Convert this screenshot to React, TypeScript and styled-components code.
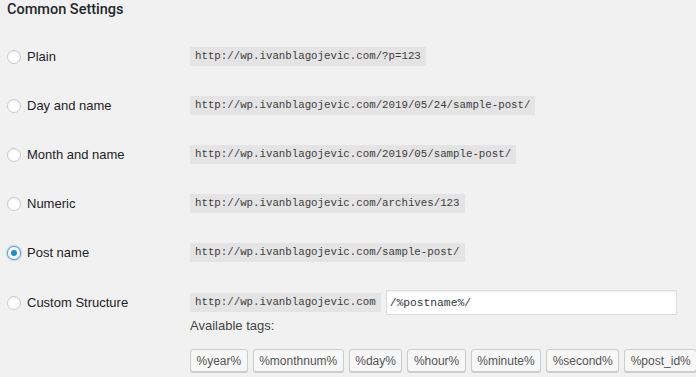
import React from 'react';
import styled, { createGlobalStyle } from 'styled-components';

const GlobalStyle = createGlobalStyle`
  html, body {
    margin: 0;
    padding: 0;
    background: #f1f1f1;
  }
  body {
    font-family: "Liberation Sans", Arial, sans-serif;
    color: #23282d;
  }
`;

const Page = styled.div`
  padding: 2px 7px 0;
  width: 696px;
  height: 377px;
  box-sizing: border-box;
  overflow: hidden;
`;

const Heading = styled.h2`
  margin: 0;
  font-family: Roboto, "Liberation Sans", Arial, sans-serif;
  font-size: 14.5px;
  line-height: 16px;
  font-weight: 500;
  color: #23282d;
`;

const List = styled.div`
  margin-top: 14px;
  display: flex;
  flex-direction: column;
`;

const Row = styled.div`
  display: grid;
  grid-template-columns: 183px 1fr;
  align-items: center;
  height: 49px;
`;

const CustomRow = styled.div`
  display: grid;
  grid-template-columns: 183px 1fr;
  align-items: start;
  padding-top: 13px;
`;

const Choice = styled.label<{ $tall?: boolean }>`
  display: flex;
  align-items: center;
  gap: 6px;
  height: ${(p) => (p.$tall ? '25px' : 'auto')};
  font-size: 13px;
  color: #1d2226;
`;

const Radio = styled.span<{ $checked?: boolean }>`
  position: relative;
  width: 14px;
  height: 14px;
  border-radius: 50%;
  box-sizing: border-box;
  background: #fff;
  border: 1px solid ${(p) => (p.$checked ? '#5b9dd9' : '#c7cbce')};
  box-shadow: ${(p) =>
    p.$checked ? '0 0 2px rgba(30,140,190,.8)' : 'inset 0 1px 2px rgba(0,0,0,.07)'};

  &::after {
    content: '';
    display: ${(p) => (p.$checked ? 'block' : 'none')};
    position: absolute;
    left: 3px;
    top: 3px;
    width: 6px;
    height: 6px;
    border-radius: 50%;
    background: #1e8cbe;
  }
`;

const Code = styled.code`
  justify-self: start;
  font-family: "Liberation Mono", "DejaVu Sans Mono", monospace;
  font-size: 10.75px;
  line-height: 19px;
  padding: 0 5px;
  background: #e4e4e4;
  color: #3c3c3c;
`;

const Structure = styled.div`
  display: flex;
  flex-direction: column;
`;

const InputLine = styled.div`
  display: flex;
  align-items: center;
  gap: 5px;
  height: 25px;
`;

const Input = styled.input`
  width: 291px;
  height: 25px;
  box-sizing: border-box;
  border: 1px solid #ddd;
  box-shadow: inset 0 1px 2px rgba(0, 0, 0, 0.07);
  background: #fff;
  padding: 0 3px;
  font-family: "Liberation Mono", "DejaVu Sans Mono", monospace;
  font-size: 11.3px;
  color: #32373c;
  outline: none;
`;

const TagsLabel = styled.div`
  margin-top: 3px;
  font-size: 13px;
  line-height: 16px;
  color: #444;
`;

const Tags = styled.div`
  display: flex;
  gap: 5px;
  margin-top: 15px;
`;

const Tag = styled.button`
  height: 23px;
  padding: 0 5.5px;
  border: 1px solid #ccc;
  border-radius: 3px;
  background: #f7f7f7;
  box-shadow: 0 1px 0 #ccc;
  font-family: "Liberation Sans", Arial, sans-serif;
  font-size: 12px;
  color: #555;
  cursor: pointer;
`;

const options = [
  { label: 'Plain', url: 'http://wp.ivanblagojevic.com/?p=123' },
  { label: 'Day and name', url: 'http://wp.ivanblagojevic.com/2019/05/24/sample-post/' },
  { label: 'Month and name', url: 'http://wp.ivanblagojevic.com/2019/05/sample-post/' },
  { label: 'Numeric', url: 'http://wp.ivanblagojevic.com/archives/123' },
  { label: 'Post name', url: 'http://wp.ivanblagojevic.com/sample-post/', checked: true },
];

const tags = ['%year%', '%monthnum%', '%day%', '%hour%', '%minute%', '%second%', '%post_id%'];

export default function App() {
  return (
    <Page>
      <GlobalStyle />
      <Heading>Common Settings</Heading>
      <List>
        {options.map((o) => (
          <Row key={o.label}>
            <Choice>
              <Radio $checked={o.checked} />
              {o.label}
            </Choice>
            <Code>{o.url}</Code>
          </Row>
        ))}
        <CustomRow>
          <Choice $tall>
            <Radio />
            Custom Structure
          </Choice>
          <Structure>
            <InputLine>
              <Code>http://wp.ivanblagojevic.com</Code>
              <Input defaultValue="/%postname%/" />
            </InputLine>
            <TagsLabel>Available tags:</TagsLabel>
            <Tags>
              {tags.map((t) => (
                <Tag key={t}>{t}</Tag>
              ))}
            </Tags>
          </Structure>
        </CustomRow>
      </List>
    </Page>
  );
}
